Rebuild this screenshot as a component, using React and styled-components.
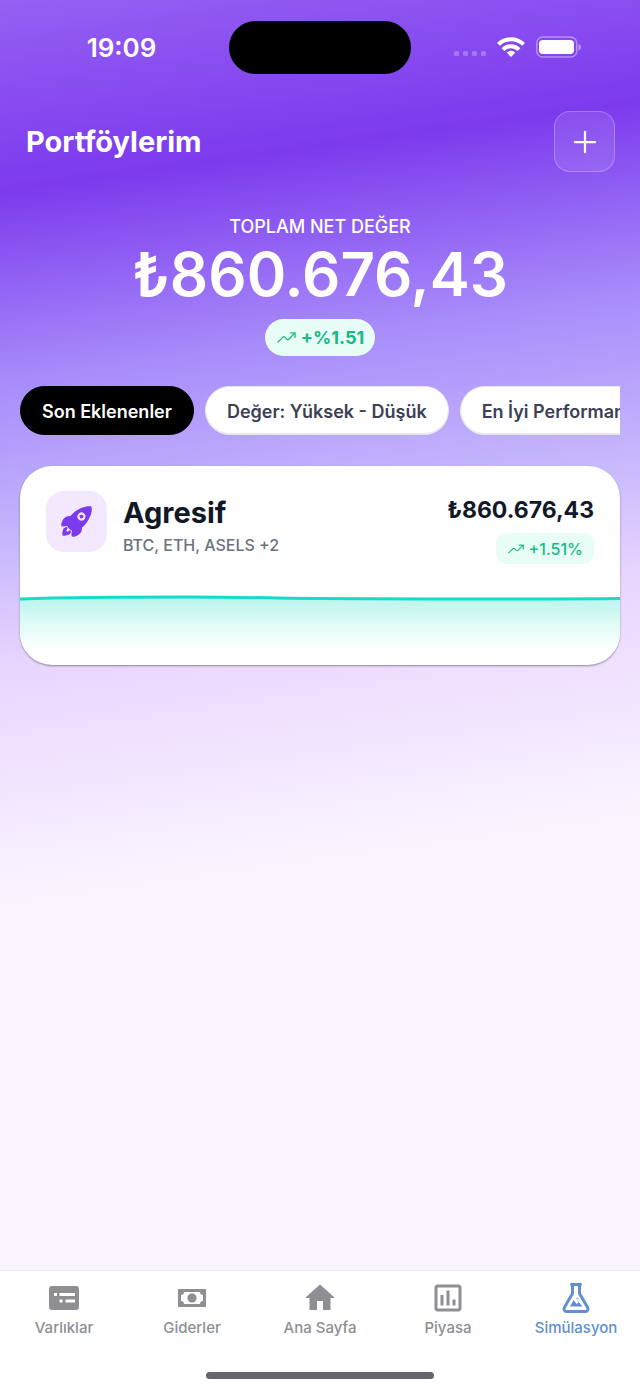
import styled, { createGlobalStyle } from "styled-components"
import { useState } from "react"
import { IoAdd, IoRocket, IoTrendingUp } from "react-icons/io5"
import { MdHome, MdOutlineAssessment } from "react-icons/md"

const filters = ["Son Eklenenler", "Değer: Yüksek - Düşük", "En İyi Performans"]

const tabs = [
    { name: "Varlıklar", icon: <CardIcon /> },
    { name: "Giderler", icon: <CashIcon /> },
    { name: "Ana Sayfa", icon: <MdHome size={36} /> },
    { name: "Piyasa", icon: <MdOutlineAssessment size={36} /> },
    { name: "Simülasyon", icon: <FlaskIcon /> },
]

export default function App() {
    const [selected, setSelected] = useState(filters[0])

    return (
        <Page>
            <GlobalStyle />
            <StatusBar>
                <Time>19:09</Time>
                <Island />
                <StatusIcons />
            </StatusBar>
            <Content>
                <Header>
                    <h1>Portföylerim</h1>
                    <AddButton aria-label="Portföy ekle"><IoAdd size={36} /></AddButton>
                </Header>
                <Total>
                    <h2>TOPLAM NET DEĞER</h2>
                    <strong>₺860.676,43</strong>
                    <TotalChange><IoTrendingUp size={21} />+%1.51</TotalChange>
                </Total>
                <Filters>
                    {filters.map((f) => (
                        <Filter key={f} $active={f === selected} onClick={() => setSelected(f)}>{f}</Filter>
                    ))}
                </Filters>
                <Card>
                    <CardTop>
                        <CardIconBox><IoRocket size={35} /></CardIconBox>
                        <CardInfo>
                            <h3>Agresif</h3>
                            <p>BTC, ETH, ASELS +2</p>
                        </CardInfo>
                        <CardValue>
                            <strong>₺860.676,43</strong>
                            <CardChange><IoTrendingUp size={18} />+1.51%</CardChange>
                        </CardValue>
                    </CardTop>
                    <Chart />
                </Card>
            </Content>
            <TabBar>
                <Tabs>
                    {tabs.map((t) => (
                        <Tab key={t.name} href="#" $active={t.name === "Simülasyon"}>
                            {t.icon}
                            {t.name}
                        </Tab>
                    ))}
                </Tabs>
                <HomeIndicator />
            </TabBar>
        </Page>
    )
}

function StatusIcons() {
    return (
        <IconGroup>
            <svg width="32" height="6" viewBox="0 0 32 6" fill="#fff" fillOpacity="0.25">
                <rect x="0" width="5" height="5" rx="1.5" />
                <rect x="9" width="5" height="5" rx="1.5" />
                <rect x="18" width="5" height="5" rx="1.5" />
                <rect x="27" width="5" height="5" rx="1.5" />
            </svg>
            <svg width="28" height="20" viewBox="0 0 28 20" fill="none" stroke="#fff" strokeWidth="4">
                <path d="M1.4 7.4a18 18 0 0 1 25.2 0" />
                <path d="M6 12.6a11.4 11.4 0 0 1 16 0" />
                <path d="M14 20l-4.300-4.400a6.100 6.100 0 0 1 8.600 0z" fill="#fff" stroke="none" />
            </svg>
            <svg width="45" height="22" viewBox="0 0 45 22">
                <rect x="0.75" y="1" width="40" height="20" rx="6" fill="none" stroke="#fff" strokeOpacity="0.4" strokeWidth="1.5" />
                <rect x="3" y="4" width="35" height="14" rx="4" fill="#fff" />
                <path d="M42.500 8c3 1 3 5.500 0 6.500z" fill="#fff" fillOpacity="0.5" />
            </svg>
        </IconGroup>
    )
}

function CardIcon() {
    return (
        <svg width="36" height="36" viewBox="0 0 36 36" fill="currentColor">
            <path fillRule="evenodd" d="M6 6h24a3 3 0 0 1 3 3v18a3 3 0 0 1-3 3H6a3 3 0 0 1-3-3V9a3 3 0 0 1 3-3zM8 13v3h3v-3zM13.500 13v3h15.500v-3zM13.500 19.500v3h3v-3zM19.500 19.500v3H29v-3z" />
        </svg>
    )
}

function CashIcon() {
    return (
        <svg width="36" height="36" viewBox="0 0 36 36" fill="currentColor">
            <path fillRule="evenodd" d="M4 9h28v18H4zM10 12a3 3 0 0 1-3 3v6a3 3 0 0 1 3 3h16a3 3 0 0 1 3-3v-6a3 3 0 0 1-3-3z" />
            <circle cx="18" cy="18" r="4.600" />
        </svg>
    )
}

function FlaskIcon() {
    return (
        <svg width="36" height="36" viewBox="0 0 36 36" fill="none" stroke="currentColor" strokeWidth="3" strokeLinejoin="round" strokeLinecap="round">
            <path d="M13.500 4.500h9M14.500 5v8.500L6.200 27.800a2.600 2.600 0 0 0 2.300 3.700h19a2.600 2.600 0 0 0 2.300-3.700l-8.300-14.300V5" />
            <path d="M12 26.500l3.600-6.500 3.200 4 1.800-1.900 3.900 4.400z" fill="currentColor" stroke="none" />
            <circle cx="19.500" cy="18.500" r="1.200" fill="currentColor" fillOpacity="0.500" stroke="none" />
        </svg>
    )
}

function Chart() {
    return (
        <ChartSvg viewBox="0 0 600 76" preserveAspectRatio="none">
            <defs>
                <linearGradient id="area" x1="0" y1="0" x2="0" y2="1">
                    <stop offset="0" stopColor="#b9f4ee" />
                    <stop offset="0.5" stopColor="#e0fbf5" />
                    <stop offset="1" stopColor="#ffffff" />
                </linearGradient>
            </defs>
            <path d="M0 10C60 8 110 8 170 8S260 9.500 300 9.500S520 10.500 600 9.500V62H0z" fill="url(#area)" />
            <path d="M0 10C60 8 110 8 170 8S260 9.500 300 9.500S520 10.500 600 9.500" fill="none" stroke="#14dccb" strokeWidth="3" />
        </ChartSvg>
    )
}

const GlobalStyle = createGlobalStyle`
    * {
        box-sizing: border-box;
    }
    body, h1, h2, h3, p {
        margin: 0;
    }
    body, button {
        font-family: Inter, sans-serif;
    }
    button {
        padding: 0;
        border: none;
        cursor: pointer;
    }
`

const Page = styled.div`
    min-height: 100vh;
    display: flex;
    flex-direction: column;
    background: linear-gradient(
        172deg,
        #9560f3 0,
        #7c3aed 190px,
        #a78bfa 376px,
        #c4b5fd 530px,
        #e9d5ff 660px,
        #faf5ff 896px
    );
`

const StatusBar = styled.div`
    height: 94px;
    display: grid;
    grid-template-columns: 1fr 182px 1fr;
    align-items: center;
`

const Time = styled.span`
    padding: 2px 0 0 14px;
    text-align: center;
    font-size: 26px;
    font-weight: 600;
    line-height: 32px;
    color: #fff;
`

const Island = styled.div`
    height: 53px;
    border-radius: 27px;
    background: #000;
`

const IconGroup = styled.div`
    display: flex;
    align-items: center;
    justify-content: center;
    gap: 11px;
    padding-right: 16px;

    svg:first-child {
        margin-top: 14px;
    }
`

const Content = styled.main`
    flex: 1;
    padding: 17px 20px 32px;
`

const Header = styled.header`
    display: flex;
    align-items: center;
    justify-content: space-between;
    padding: 0 5px 0 6px;

    h1 {
        font-size: 29px;
        font-weight: 700;
        line-height: 36px;
        color: #fff;
    }
`

const AddButton = styled.button`
    width: 61px;
    height: 61px;
    display: flex;
    align-items: center;
    justify-content: center;
    border: 1px solid rgba(255, 255, 255, 0.25);
    border-radius: 16px;
    background: rgba(255, 255, 255, 0.1);
    color: #fff;
`

const Total = styled.section`
    display: flex;
    flex-direction: column;
    align-items: center;
    margin: 42px 0 30px;
    color: #fff;

    h2 {
        font-size: 18px;
        font-weight: 500;
        line-height: 25px;
    }
    strong {
        font-size: 60px;
        font-weight: 600;
        line-height: 70px;
    }
`

const TotalChange = styled.span`
    height: 37px;
    display: flex;
    align-items: center;
    gap: 4px;
    margin-top: 10px;
    padding: 0 11px;
    border-radius: 19px;
    background: #e9fdf7;
    font-size: 18px;
    font-weight: 700;
    color: #18b984;
`

const Filters = styled.div`
    display: flex;
    gap: 11px;
    overflow-x: auto;
    scrollbar-width: none;
`

const Filter = styled.button`
    flex-shrink: 0;
    height: 49px;
    padding: 2px 21px 0;
    border: 1px solid ${(props) => (props.$active ? "#000" : "#e5e7eb")};
    border-radius: 25px;
    background: ${(props) => (props.$active ? "#000" : "#fff")};
    box-shadow: inset 0 -1px 0 ${(props) => (props.$active ? "#000" : "#e5e7eb")};
    font-size: 18px;
    font-weight: 600;
    color: ${(props) => (props.$active ? "#fff" : "#3d3f55")};
`

const Card = styled.article`
    margin-top: 31px;
    overflow: hidden;
    border-radius: 32px;
    background: #fff;
    box-shadow: 0 1px 2px rgba(0, 0, 0, 0.4);
`

const CardTop = styled.div`
    display: flex;
    gap: 16px;
    padding: 25px 26px;
`

const CardIconBox = styled.div`
    width: 61px;
    height: 61px;
    display: flex;
    align-items: center;
    justify-content: center;
    border-radius: 18px;
    background: #f3e8ff;
    color: #7c3aed;
`

const CardInfo = styled.div`
    flex: 1;

    h3 {
        font-size: 29px;
        font-weight: 700;
        line-height: 44px;
        color: #111827;
    }
    p {
        font-size: 16px;
        font-weight: 500;
        line-height: 20px;
        color: #6b7280;
    }
`

const CardValue = styled.div`
    display: flex;
    flex-direction: column;
    align-items: flex-end;
    gap: 4px;

    strong {
        font-size: 23px;
        font-weight: 700;
        line-height: 38px;
        color: #111827;
    }
`

const CardChange = styled.span`
    height: 31px;
    display: flex;
    align-items: center;
    gap: 4px;
    padding: 0 11px;
    border-radius: 11px;
    background: #e9fdf7;
    font-size: 16px;
    font-weight: 500;
    color: #18b984;
`

const ChartSvg = styled.svg`
    display: block;
    width: 100%;
    height: 76px;
`

const TabBar = styled.nav`
    height: 121px;
    display: flex;
    flex-direction: column;
    justify-content: space-between;
    align-items: center;
    padding: 9px 0 12px;
    border-top: 1px solid #ececf0;
    background: #fff;
`

const Tabs = styled.div`
    width: 100%;
    display: grid;
    grid-template-columns: repeat(5, 1fr);
`

const Tab = styled.a`
    display: flex;
    flex-direction: column;
    align-items: center;
    gap: 2px;
    font-size: 15px;
    font-weight: 500;
    line-height: 20px;
    text-decoration: none;
    color: ${(props) => (props.$active ? "#638ed0" : "#8e8e93")};
`

const HomeIndicator = styled.div`
    width: 228px;
    height: 7px;
    border-radius: 4px;
    background: #66656d;
`
